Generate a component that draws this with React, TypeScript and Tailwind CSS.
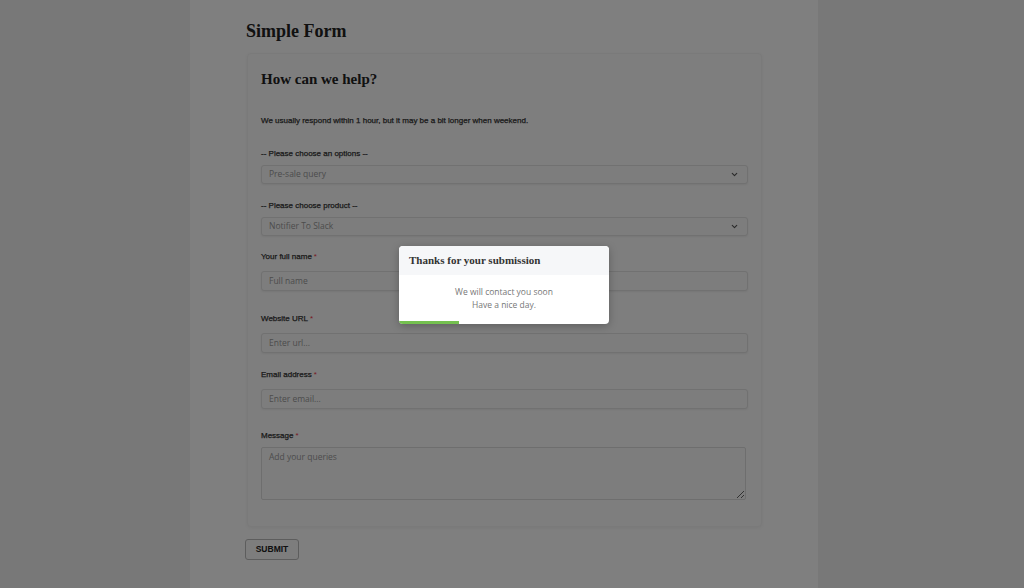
import { ChevronDown } from 'lucide-react'

const sans = "font-['Liberation_Sans',Arial,sans-serif]"
const open = "font-['Open_Sans',sans-serif]"
const serif = "font-['Liberation_Serif','Times_New_Roman',serif]"

function Label({ text, required }: { text: string; required?: boolean }) {
  return (
    <div className={`${sans} text-[8px] leading-[10px] text-[#333] [-webkit-text-stroke:0.25px_#333]`}>
      {text}
      {required && <span className="ml-[2px] text-[#f0364a] [-webkit-text-stroke:0]">*</span>}
    </div>
  )
}

function Select({ value }: { value: string }) {
  return (
    <div className="flex h-[19px] items-center justify-between rounded-[3px] border border-[#e2e2e2] bg-[#fbfbfb] pl-[7px] pr-[8px] shadow-[0_1px_2px_rgba(0,0,0,0.06)]">
      <span className={`${open} text-[8.5px] text-[#999]`}>{value}</span>
      <ChevronDown size={9} strokeWidth={3} className="text-[#555]" />
    </div>
  )
}

function Input({ placeholder }: { placeholder: string }) {
  return (
    <div className="flex h-[20px] items-center rounded-[3px] border border-[#e2e2e2] bg-[#fbfbfb] pl-[7px] shadow-[0_1px_2px_rgba(0,0,0,0.06)]">
      <span className={`${open} text-[8.5px] text-[#999]`}>{placeholder}</span>
    </div>
  )
}

export default function App() {
  return (
    <div className="relative min-h-[588px] w-full bg-[#f0f0f0]">
      <div className="ml-[190px] min-h-[588px] w-[628px] bg-white px-[56px] pt-[20px]">
        <h1 className={`${serif} text-[18px] leading-[22px] font-bold text-[#222]`}>Simple Form</h1>

        <div className="mt-[11px] ml-[1px] h-[474px] rounded-[4px] border border-[#f5f5f5] bg-[#fcfcfc] px-[13px] pt-[16px] shadow-[0_1px_4px_rgba(0,0,0,0.06)]">
          <h2 className={`${serif} text-[15px] leading-[18px] font-bold text-[#222]`}>How can we help?</h2>

          <p className={`${sans} mt-[28px] text-[8px] leading-[10px] text-[#333] [-webkit-text-stroke:0.25px_#333]`}>
            We usually respond within 1 hour, but it may be a bit longer when weekend.
          </p>

          <div className="mt-[23px]">
            <Label text="-- Please choose an options --" />
            <div className="mt-[6px]">
              <Select value="Pre-sale query" />
            </div>
          </div>

          <div className="mt-[17px]">
            <Label text="-- Please choose product --" />
            <div className="mt-[6px]">
              <Select value="Notifier To Slack" />
            </div>
          </div>

          <div className="mt-[16px]">
            <Label text="Your full name" required />
            <div className="mt-[9px]">
              <Input placeholder="Full name" />
            </div>
          </div>

          <div className="mt-[23px]">
            <Label text="Website URL" required />
            <div className="mt-[9px]">
              <Input placeholder="Enter url..." />
            </div>
          </div>

          <div className="mt-[17px]">
            <Label text="Email address" required />
            <div className="mt-[9px]">
              <Input placeholder="Enter email..." />
            </div>
          </div>

          <div className="mt-[22px]">
            <Label text="Message" required />
            <textarea
              placeholder="Add your queries"
              className={`${open} mt-[6px] block h-[53px] w-[485px] resize rounded-[2px] border border-[#ddd] bg-[#fbfbfb] px-[7px] py-[3px] text-[8.5px] outline-none placeholder:text-[#999]`}
            />
          </div>
        </div>

        <button
          className={`${sans} mt-[12px] -ml-[1px] h-[21px] w-[54px] rounded-[3px] border border-[#bbb] bg-[#fafafa] text-[8.5px] font-bold text-[#222]`}
        >
          SUBMIT
        </button>
      </div>

      <div className="absolute inset-0 bg-black/50" />

      <div className="absolute left-[399px] top-[246px] w-[210px] overflow-hidden rounded-[4px] bg-white shadow-[0_2px_8px_rgba(0,0,0,0.25)]">
        <div className={`${serif} h-[29px] bg-[#f6f7f9] pl-[10px] pt-[7px] text-[11px] leading-[14px] font-bold text-[#333]`}>
          Thanks for your submission
        </div>
        <div className={`${open} pt-[10px] pb-[10px] text-center text-[8.5px] leading-[13px] text-[#777]`}>
          <div>We will contact you soon</div>
          <div>Have a nice day.</div>
        </div>
        <div className="h-[3px] w-[60px] bg-[#74c04f]" />
      </div>
    </div>
  )
}
